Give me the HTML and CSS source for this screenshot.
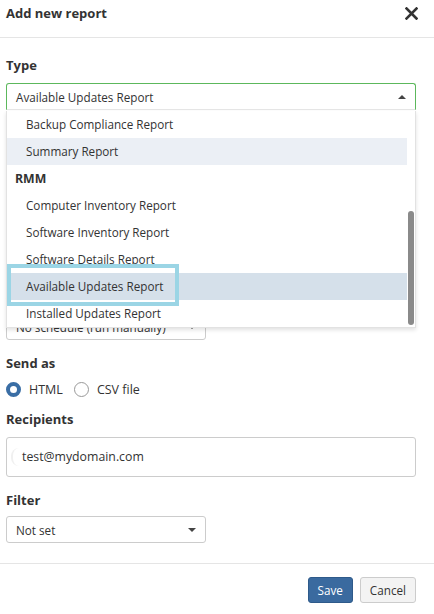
FILE: index.html
```html
<!DOCTYPE html>
<html lang="en">
  <head>
    <meta charset="UTF-8" />
    <title>Add new report</title>
    <link rel="stylesheet" href="styles.css">
  </head>
  <body>
    <div class="dialog">
      <!-- Header -->
      <header class="dialog-header">
        <h2>Add new report</h2>
        <button class="close-btn" aria-label="Close">
          <svg width="13" height="13" viewBox="0 0 13 13">
            <path d="M1.5 1.5 L11.5 11.5 M11.5 1.5 L1.5 11.5" stroke="#333" stroke-width="2.6" stroke-linecap="square" />
          </svg>
        </button>
      </header>

      <!-- Body -->
      <div class="dialog-body">
        <div class="field">
          <label>Type</label>
          <div class="select-wrap">
            <div class="select wide open">
              <span>Available Updates Report</span>
              <span class="caret up"></span>
            </div>
            <ul class="dropdown">
              <li>Backup Compliance Report</li>
              <li class="hover">Summary Report</li>
              <li class="group">RMM</li>
              <li>Computer Inventory Report</li>
              <li>Software Inventory Report</li>
              <li>Software Details Report</li>
              <li class="selected"><span class="mark"></span>Available Updates Report</li>
              <li>Installed Updates Report</li>
              <div class="scrollbar"></div>
            </ul>
          </div>
        </div>

        <div class="field">
          <label>Name</label>
          <div class="input small"></div>
        </div>

        <div class="field">
          <label>Description</label>
          <div class="input area"></div>
        </div>

        <div class="field">
          <label>Schedule</label>
          <div class="select">
            <span>No schedule (run manually)</span>
            <span class="caret"></span>
          </div>
        </div>

        <div class="field send">
          <label class="tight">Send as</label>
          <div class="radios">
            <span class="radio checked"></span><span class="radio-label">HTML</span>
            <span class="radio"></span><span class="radio-label">CSV file</span>
          </div>
        </div>

        <div class="field">
          <label>Recipients</label>
          <div class="input tags">
            <span class="tag">test@mydomain.com</span>
          </div>
        </div>

        <div class="field last">
          <label class="filter-label">Filter</label>
          <div class="select">
            <span>Not set</span>
            <span class="caret"></span>
          </div>
        </div>
      </div>

      <!-- Footer -->
      <footer class="dialog-footer">
        <button class="btn btn-primary">Save</button>
        <button class="btn">Cancel</button>
      </footer>
    </div>
  </body>
</html>
```

FILE: styles.css
```css
body {
  font-family: "Open Sans", Arial, sans-serif;
  font-size: 11.7px;
  color: #333;
  margin: 0;
  padding: 0;
  background: #fff;
}
.dialog {
  width: 434px;
}
/* Header */
.dialog-header {
  display: flex;
  justify-content: space-between;
  align-items: flex-start;
  height: 38px;
  padding: 4px 18px 0 6px;
  box-sizing: border-box;
  border-bottom: 1px solid #e5e5e5;
}
.dialog-header h2 {
  margin: 0;
  font-size: 13px;
  line-height: 18px;
  font-weight: 700;
}
.close-btn {
  background: none;
  border: none;
  padding: 0;
  margin-top: 3px;
  margin-right: -2px;
  cursor: pointer;
}
/* Body */
.dialog-body {
  padding: 18px 18px 20px 6px;
  border-bottom: 1px solid #e5e5e5;
}
.field {
  margin-bottom: 14px;
}
.field.send {
  margin-bottom: 12px;
}
.field.last {
  margin-bottom: 0;
}
.field label {
  display: block;
  font-size: 13px;
  font-weight: 700;
  line-height: 18px;
  margin-bottom: 9px;
}
.field label.tight {
  margin-bottom: 8px;
}
.field label.filter-label {
  margin-bottom: 7px;
}
.select {
  display: flex;
  justify-content: space-between;
  align-items: center;
  width: 200px;
  height: 27px;
  box-sizing: border-box;
  padding: 0 9px 0 9px;
  border: 1px solid #ccc;
  border-radius: 3px;
  background: #fff;
}
.select.wide {
  width: 100%;
}
.select.open {
  border-color: #5cb85c;
  border-bottom-color: #e6e6e6;
  border-radius: 3px 3px 0 0;
}
.caret {
  width: 0;
  height: 0;
  border-left: 4px solid transparent;
  border-right: 4px solid transparent;
  border-top: 4px solid #444;
}
.caret.up {
  border-top: none;
  border-bottom: 4px solid #444;
}
.input {
  border: 1px solid #ccc;
  border-radius: 3px;
  box-sizing: border-box;
  background: #fff;
}
.input.small {
  height: 27px;
}
.input.area {
  height: 53px;
}
.input.tags {
  height: 40px;
  display: flex;
  align-items: center;
  padding-left: 4px;
}
.tag {
  font-size: 12.3px;
  padding-left: 9px;
  border-left: 2px solid #f0f0f0;
  border-radius: 8px 0 0 8px;
  line-height: 18px;
}
/* Dropdown */
.select-wrap {
  position: relative;
}
.dropdown {
  position: absolute;
  top: 28px;
  left: 0;
  right: 0;
  margin: 0;
  padding: 0 8px 0 0;
  list-style: none;
  background: #fff;
  border: 1px solid #e2e2e2;
  border-top: none;
  box-shadow: 0 2px 4px rgba(0, 0, 0, 0.12);
  z-index: 5;
}
.dropdown li {
  position: relative;
  height: 27px;
  line-height: 27px;
  padding-left: 19px;
}
.dropdown li.group {
  padding-left: 8px;
  font-weight: 700;
  font-size: 12.3px;
}
.dropdown li.hover {
  background: #ebeff5;
}
.dropdown li.selected {
  background: #d5e0ea;
}
.mark {
  position: absolute;
  left: 0;
  top: -9px;
  width: 164px;
  height: 34px;
  border: 4px solid #9bd5e5;
}
.scrollbar {
  position: absolute;
  right: 1px;
  top: 100px;
  bottom: 2px;
  width: 6px;
  border-radius: 3px;
  background: #8a8a8a;
}
/* Radios */
.radios {
  display: flex;
  align-items: center;
  height: 18px;
}
.radio {
  width: 15px;
  height: 15px;
  box-sizing: border-box;
  border: 1px solid #999;
  border-radius: 50%;
  margin-right: 8px;
}
.radio.checked {
  border: 4px solid #3a6ea5;
}
.radio-label {
  font-size: 12.5px;
  margin-right: 11px;
}
/* Footer */
.dialog-footer {
  display: flex;
  justify-content: flex-end;
  gap: 7px;
  padding: 13px 18px 0 6px;
}
.btn {
  font-family: inherit;
  font-size: 11.7px;
  height: 26px;
  padding: 0 9px;
  border: 1px solid #ccc;
  border-radius: 3px;
  background: #f3f3f3;
  color: #333;
  cursor: pointer;
}
.btn-primary {
  background: #3a6a9f;
  border-color: #2e5a8a;
  color: #fff;
}
```
